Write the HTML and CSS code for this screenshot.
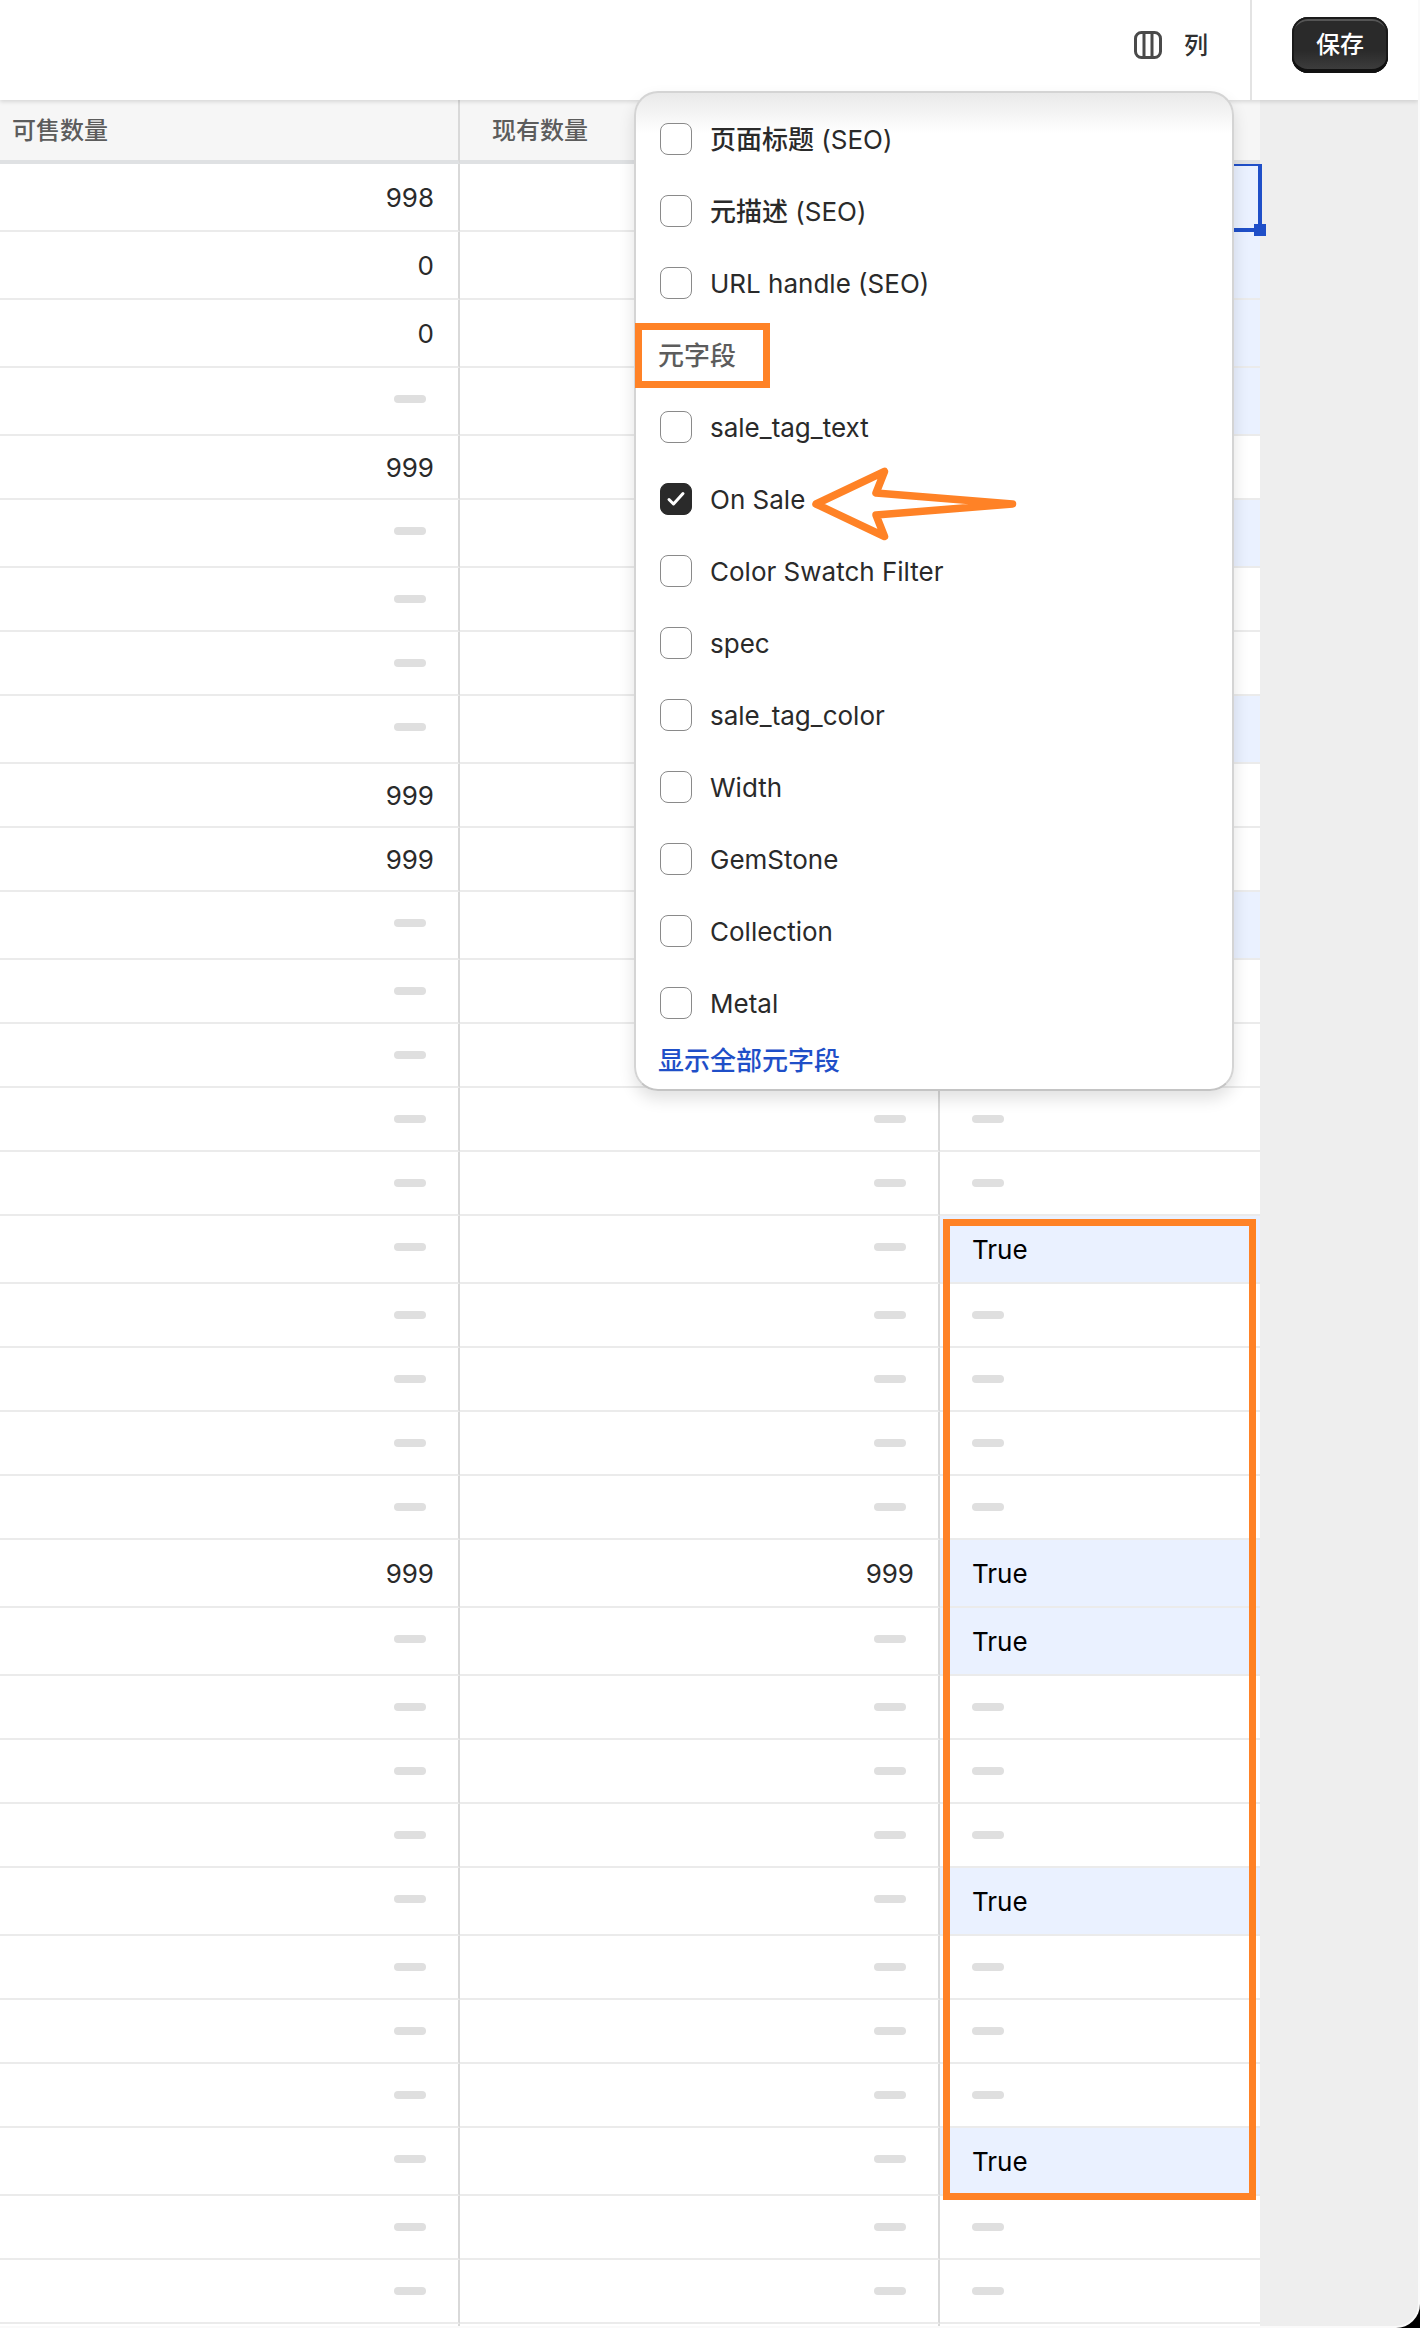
FILE: index.html
```
<!DOCTYPE html>
<html lang="zh-CN">
<head>
    <meta charset="utf-8">
    <title>批量编辑</title>
    <link rel="stylesheet" href="styles.css">
</head>
<body>
    <div class="window">
        <header class="toolbar">
            <button type="button" class="columns-button">
                <svg width="28" height="28" viewBox="0 0 28 28" fill="none" stroke="#4a4a4a">
                    <rect x="1.5" y="1.5" width="25" height="25" rx="6" stroke-width="3"/>
                    <path d="M10 2v24M18 2v24" stroke-width="3"/>
                </svg>
                <span>列</span>
            </button>
            <div class="save-area">
                <button type="button" class="save-button">保存</button>
            </div>
        </header>

        <main class="editor">
            <div class="sheet">
                <table>
                    <colgroup>
                        <col>
                        <col class="col-stock">
                        <col class="col-sale">
                    </colgroup>
                    <thead>
                        <tr><th>可售数量</th><th>现有数量</th><th></th></tr>
                    </thead>
                    <tbody>
                        <tr class="tall"><td>998</td><td></td><td class="on active"><span class="selection"></span></td></tr>
                        <tr class="tall"><td>0</td><td></td><td class="on"></td></tr>
                        <tr class="tall"><td>0</td><td></td><td class="on"></td></tr>
                        <tr class="tall"><td class="none"><i></i></td><td></td><td class="on"></td></tr>
                        <tr><td>999</td><td></td><td></td></tr>
                        <tr class="tall"><td class="none"><i></i></td><td></td><td class="on"></td></tr>
                        <tr><td class="none"><i></i></td><td></td><td></td></tr>
                        <tr><td class="none"><i></i></td><td></td><td></td></tr>
                        <tr class="tall"><td class="none"><i></i></td><td></td><td class="on"></td></tr>
                        <tr><td>999</td><td></td><td></td></tr>
                        <tr><td>999</td><td></td><td></td></tr>
                        <tr class="tall"><td class="none"><i></i></td><td></td><td class="on"></td></tr>
                        <tr><td class="none"><i></i></td><td></td><td></td></tr>
                        <tr><td class="none"><i></i></td><td></td><td></td></tr>
                        <tr><td class="none"><i></i></td><td class="none"><i></i></td><td class="none"><i></i></td></tr>
                        <tr><td class="none"><i></i></td><td class="none"><i></i></td><td class="none"><i></i></td></tr>
                        <tr class="tall"><td class="none"><i></i></td><td class="none"><i></i></td><td class="on">True</td></tr>
                        <tr><td class="none"><i></i></td><td class="none"><i></i></td><td class="none"><i></i></td></tr>
                        <tr><td class="none"><i></i></td><td class="none"><i></i></td><td class="none"><i></i></td></tr>
                        <tr><td class="none"><i></i></td><td class="none"><i></i></td><td class="none"><i></i></td></tr>
                        <tr><td class="none"><i></i></td><td class="none"><i></i></td><td class="none"><i></i></td></tr>
                        <tr class="tall"><td>999</td><td>999</td><td class="on">True</td></tr>
                        <tr class="tall"><td class="none"><i></i></td><td class="none"><i></i></td><td class="on">True</td></tr>
                        <tr><td class="none"><i></i></td><td class="none"><i></i></td><td class="none"><i></i></td></tr>
                        <tr><td class="none"><i></i></td><td class="none"><i></i></td><td class="none"><i></i></td></tr>
                        <tr><td class="none"><i></i></td><td class="none"><i></i></td><td class="none"><i></i></td></tr>
                        <tr class="tall"><td class="none"><i></i></td><td class="none"><i></i></td><td class="on">True</td></tr>
                        <tr><td class="none"><i></i></td><td class="none"><i></i></td><td class="none"><i></i></td></tr>
                        <tr><td class="none"><i></i></td><td class="none"><i></i></td><td class="none"><i></i></td></tr>
                        <tr><td class="none"><i></i></td><td class="none"><i></i></td><td class="none"><i></i></td></tr>
                        <tr class="tall"><td class="none"><i></i></td><td class="none"><i></i></td><td class="on">True</td></tr>
                        <tr><td class="none"><i></i></td><td class="none"><i></i></td><td class="none"><i></i></td></tr>
                        <tr><td class="none"><i></i></td><td class="none"><i></i></td><td class="none"><i></i></td></tr>
                        <tr><td></td><td></td><td></td></tr>
                    </tbody>
                </table>
                <div class="highlight-column"></div>
            </div>
        </main>

        <div class="popover">
            <ul>
                <li><label><input type="checkbox"><span><b>页面标题</b> (SEO)</span></label></li>
                <li><label><input type="checkbox"><span><b>元描述</b> (SEO)</span></label></li>
                <li><label><input type="checkbox"><span>URL handle (SEO)</span></label></li>
                <li class="group-title"><span>元字段</span></li>
                <li><label><input type="checkbox"><span>sale_tag_text</span></label></li>
                <li>
                    <label><input type="checkbox" checked><span>On Sale</span></label>
                    <svg class="tick" width="32" height="32" viewBox="0 0 32 32" fill="none" stroke="#fff" stroke-width="3" stroke-linecap="round" stroke-linejoin="round">
                        <path d="M9 16.5l4.5 4.5L23 10.5"/>
                    </svg>
                    <svg class="arrow" width="206" height="74" viewBox="0 0 206 74" fill="none" stroke="#ff8226" stroke-width="7.5" stroke-linecap="round" stroke-linejoin="round">
                        <path d="M4 37L72.5 4.5L64 26L200.5 37L64 48L72.5 69.5Z"/>
                    </svg>
                </li>
                <li><label><input type="checkbox"><span>Color Swatch Filter</span></label></li>
                <li><label><input type="checkbox"><span>spec</span></label></li>
                <li><label><input type="checkbox"><span>sale_tag_color</span></label></li>
                <li><label><input type="checkbox"><span>Width</span></label></li>
                <li><label><input type="checkbox"><span>GemStone</span></label></li>
                <li><label><input type="checkbox"><span>Collection</span></label></li>
                <li><label><input type="checkbox"><span>Metal</span></label></li>
            </ul>
            <a href="#" class="show-all">显示全部元字段</a>
        </div>
    </div>
</body>
</html>
```
FILE: styles.css
```
*,
*::before,
*::after {
    box-sizing: border-box;
}
body {
    margin: 0;
    background: #000;
    color: #2a2a2a;
    font-family: Inter, "Noto Sans CJK SC", sans-serif;
    font-size: 26px;
    line-height: 40px;
}
button {
    font: inherit;
    cursor: pointer;
}
b {
    font-weight: 500;
}
.window {
    position: relative;
    display: flex;
    flex-direction: column;
    height: 100vh;
    overflow: hidden;
    background: #eee;
    border-right: 2px solid #fafafa;
    border-bottom: 2px solid #fafafa;
    border-bottom-right-radius: 24px;
}

/* toolbar */
.toolbar {
    position: relative;
    z-index: 1;
    display: flex;
    flex: none;
    justify-content: flex-end;
    align-items: stretch;
    height: 100px;
    background: #fff;
    box-shadow: 0 2px 4px rgba(0, 0, 0, 0.12);
}
.columns-button {
    display: flex;
    align-items: center;
    gap: 22px;
    padding: 0 42px 10px 24px;
    border: 0;
    background: none;
    color: #303030;
    font-size: 24px;
    font-weight: 500;
}
.columns-button span {
    padding-top: 2px;
}
.save-area {
    padding: 17px 30px 0 40px;
    border-left: 2px solid #e3e3e3;
}
.save-button {
    display: block;
    height: 56px;
    padding: 0 24px;
    border: 0;
    border-radius: 16px;
    background: linear-gradient(#2a2a2a 60%, #404040);
    box-shadow: inset 0 -4px 0 #111, inset 0 0 0 2px #1a1a1a, inset 0 4px 0 #555;
    color: #fff;
    font-size: 24px;
    font-weight: 500;
}

/* sheet */
.editor {
    flex: 1;
    min-height: 0;
    padding-right: 158px;
}
.sheet {
    position: relative;
}
table {
    width: 100%;
    table-layout: fixed;
    border-collapse: separate;
    border-spacing: 0;
    background: #fff;
}
.col-stock {
    width: 480px;
}
.col-sale {
    width: 320px;
}
th {
    height: 64px;
    padding: 2px 32px 0;
    border-right: 2px solid #d9d9d9;
    border-bottom: 4px solid #dfe1e3;
    background: #f6f6f6;
    color: #5c5c5c;
    font-size: 24px;
    font-weight: 500;
    text-align: left;
}
th:first-child {
    padding-left: 12px;
}
td {
    height: 64px;
    padding: 2px 24px 0 32px;
    border-right: 2px solid #d9d9d9;
    border-bottom: 2px solid #ebebeb;
    text-align: right;
}
th:last-child,
td:last-child {
    border-right: 0;
    text-align: left;
}
.tall td {
    height: 68px;
}
td.on {
    background: #eaf1ff;
    color: #000;
}
td.none {
    padding-top: 27px;
    vertical-align: top;
}
.none i {
    display: block;
    width: 32px;
    height: 8px;
    margin: 0 8px 0 auto;
    border-radius: 4px;
    background: #dfdfdf;
}
.none:last-child i {
    margin: 0;
}
td.active {
    position: relative;
}
.selection {
    position: absolute;
    inset: 0 -2px -2px 0;
    border: 4px solid #1f4fc8;
    border-top-width: 2px;
}
.selection::after {
    content: "";
    position: absolute;
    right: -8px;
    bottom: -8px;
    width: 12px;
    height: 12px;
    background: #1f4fc8;
}
.highlight-column {
    position: absolute;
    top: 1119px;
    right: 4px;
    width: 313px;
    height: 981px;
    border: 7px solid #ff8226;
}

/* column picker */
.popover {
    position: absolute;
    z-index: 2;
    top: 91px;
    right: 184px;
    width: 600px;
    padding: 10px 0 8px;
    border: 2px solid #d4d4d4;
    border-bottom-color: #c4c4c4;
    border-radius: 24px;
    background: linear-gradient(#e9e9e9, #fff 40px);
    box-shadow: 0 8px 16px rgba(0, 0, 0, 0.12);
}
.popover ul {
    margin: 0;
    padding: 0;
    list-style: none;
}
.popover li {
    position: relative;
    display: flex;
    align-items: center;
    height: 72px;
    padding: 0 24px;
}
.popover label {
    display: flex;
    align-items: center;
    gap: 18px;
}
.popover li span {
    padding-top: 2px;
}
.popover input {
    appearance: none;
    width: 32px;
    height: 32px;
    margin: 0;
    border: 1px solid #8a8a8a;
    border-radius: 8px;
    background: #fff;
}
.popover input:checked {
    border-color: #2a2a2a;
    background: #2a2a2a;
}
.tick {
    position: absolute;
    left: 24px;
    pointer-events: none;
}
.arrow {
    position: absolute;
    top: 4px;
    left: 176px;
}
.popover .group-title {
    padding-left: 22px;
    color: #5c5c5c;
    font-weight: 500;
}
.group-title::after {
    content: "";
    position: absolute;
    top: 4px;
    left: -1px;
    width: 135px;
    height: 65px;
    border: 7px solid #ff8226;
}
.show-all {
    display: block;
    padding: 2px 22px 0;
    color: #1f4fc8;
    font-weight: 500;
    text-decoration: none;
}
```
